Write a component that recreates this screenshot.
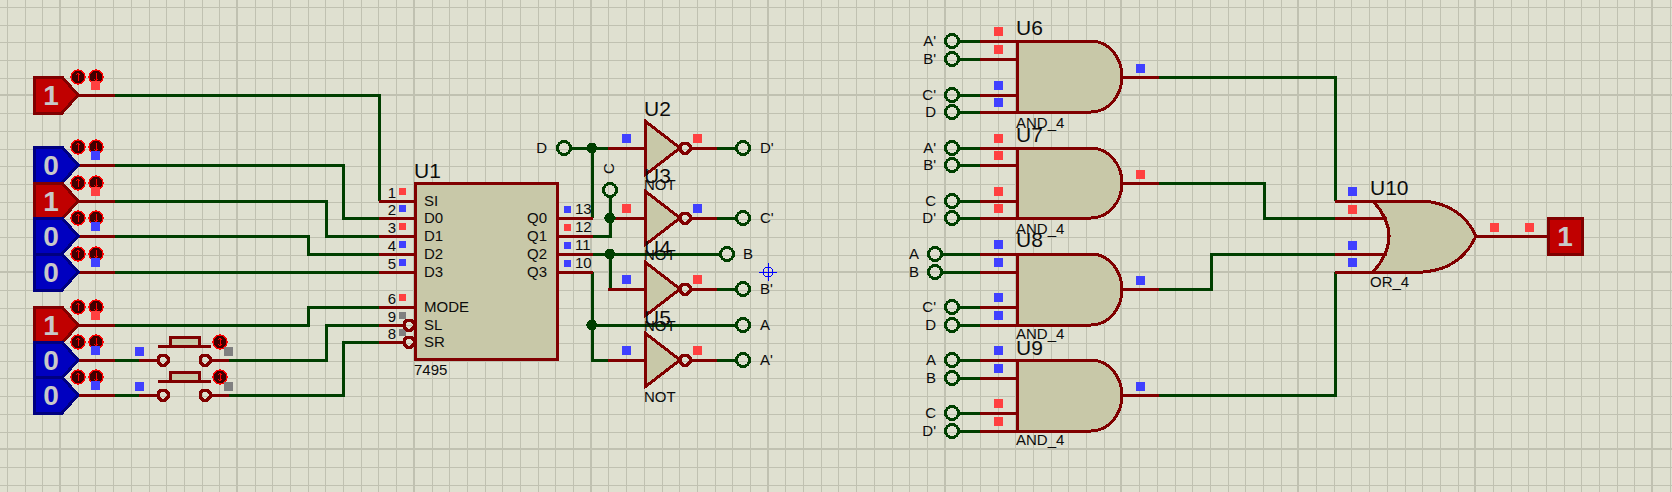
const SQUARE = {
  r: 'fill-[#ff4040]',
  b: 'fill-[#4040ff]',
  g: 'fill-[#808080]',
}

const gridX = Array.from({ length: 95 }, (_, i) => i)
const gridY = Array.from({ length: 30 }, (_, i) => i)

function Grid() {
  return (
    <g className="stroke-[#c0c1b1]">
      {gridX.map(i => {
        const x = Math.round(7 + i * 17.69)
        return <line key={i} x1={x} x2={x} y1="0" y2="492" strokeWidth={(i - 3) % 10 === 0 ? 2 : 1} />
      })}
      {gridY.map(i => {
        const y = Math.round(7 + i * 17.69)
        return <line key={i} x1="0" x2="1672" y1={y} y2={y} strokeWidth={(i - 5) % 10 === 0 ? 2 : 1} />
      })}
    </g>
  )
}

function Wire({ points, red }) {
  return <polyline points={points} className={`fill-none stroke-[3] ${red ? 'stroke-[#800000]' : 'stroke-[#003f00]'}`} />
}

function Probe({ x, y, color, size = 9 }) {
  return <rect x={x} y={y} width={size} height={size} className={SQUARE[color]} />
}

function Label({ x, y, children, end, big }) {
  return (
    <text
      x={x}
      y={y}
      textAnchor={end ? 'end' : 'start'}
      className={`fill-[#0c0c0c] ${big ? 'text-[21px]' : 'text-[15px]'}`}
    >
      {children}
    </text>
  )
}

// small round up / down buttons on the logic state sources
function StepButton({ cx, cy, up, down }) {
  return (
    <g>
      <circle cx={cx} cy={cy} r="7" className="fill-[#400000] stroke-[#ff0000] stroke-[1.5]" />
      <line x1={cx} x2={cx} y1={cy - 4} y2={cy + 4} className="stroke-[#ff0000] stroke-[1]" />
      {up && <polyline points={`${cx - 2},${cy - 2} ${cx},${cy - 4} ${cx + 2},${cy - 2}`} className="fill-none stroke-[#ff0000] stroke-[1]" />}
      {down && <polyline points={`${cx - 2},${cy + 2} ${cx},${cy + 4} ${cx + 2},${cy + 2}`} className="fill-none stroke-[#ff0000] stroke-[1]" />}
    </g>
  )
}

function LogicSource({ cy, value }) {
  const high = value === 1
  return (
    <g>
      <polygon
        points={`34,${cy - 18} 62,${cy - 18} 78,${cy} 62,${cy + 18} 34,${cy + 18}`}
        className={`stroke-[3] ${high ? 'fill-[#c00000] stroke-[#800000]' : 'fill-[#0000c0] stroke-[#000080]'}`}
      />
      <text x="51" y={cy + 10} textAnchor="middle" className="fill-[#c8c8c8] text-[28px] font-bold">{value}</text>
      <StepButton cx={78} cy={cy - 18} up />
      <StepButton cx={96} cy={cy - 18} down />
      <Probe x={91} y={cy - 14} color={high ? 'r' : 'b'} />
    </g>
  )
}

function Terminal({ x, y }) {
  return <circle cx={x} cy={y} r="6.5" className="fill-none stroke-[#003f00] stroke-[3]" />
}

function Junction({ x, y }) {
  return <polygon points={`${x - 6},${y} ${x - 3},${y - 5} ${x + 3},${y - 5} ${x + 6},${y} ${x + 3},${y + 5} ${x - 3},${y + 5}`} className="fill-[#003f00]" />
}

// inversion bubble and switch contact, an octagon as the editor draws them
function Bubble({ x, y }) {
  return (
    <polygon
      points={`${x - 5},${y - 2} ${x - 2},${y - 5} ${x + 2},${y - 5} ${x + 5},${y - 2} ${x + 5},${y + 2} ${x + 2},${y + 5} ${x - 2},${y + 5} ${x - 5},${y + 2}`}
      className="fill-none stroke-[#800000] stroke-[3]"
    />
  )
}

function PushButton({ cy }) {
  return (
    <g>
      <Wire points={`79,${cy} 115,${cy}`} red />
      <Wire points={`115,${cy} 139,${cy}`} />
      <Wire points={`139,${cy} 158,${cy}`} red />
      <Bubble x={163} y={cy} />
      <Bubble x={205} y={cy} />
      <Wire points={`210,${cy} 229,${cy}`} red />
      <Wire points={`158,${cy - 14} 211,${cy - 14}`} red />
      <rect x="170" y={cy - 23} width="29" height="9" className="fill-[#c8c8a8] stroke-[#800000] stroke-[3]" />
      <StepButton cx={220} cy={cy - 18} up down />
      <Probe x={135} y={cy - 13} color="b" />
      <Probe x={224} y={cy - 13} color="g" />
    </g>
  )
}

function NotGate({ cy, name, inColor, outColor, nameY, typeY, inX = 608 }) {
  return (
    <g>
      <Wire points={`${inX},${cy} 645,${cy}`} red />
      <polygon points={`645,${cy - 27} 680,${cy} 645,${cy + 27}`} className="fill-[#c8c8a8] stroke-[#800000] stroke-[3]" />
      <Bubble x={685} y={cy} />
      <Wire points={`691,${cy} 717,${cy}`} red />
      <Wire points={`717,${cy} 736,${cy}`} />
      <Terminal x={743} y={cy} />
      <Probe x={622} y={cy - 14} color={inColor} />
      <Probe x={693} y={cy - 14} color={outColor} />
      <Label x={644} y={nameY} big>{name}</Label>
      <Label x={644} y={typeY}>NOT</Label>
    </g>
  )
}

function AndGate({ name, rows, labels, colors, out, outColor, nameY, typeY, farFirst }) {
  const [top, , , bottom] = rows
  return (
    <g>
      {rows.map((y, i) => {
        const cx = farFirst && i < 2 ? 935 : 952
        return (
          <g key={i}>
            <Wire points={`${cx + 6},${y} 980,${y}`} />
            <Wire points={`980,${y} 1017,${y}`} red />
            <Terminal x={cx} y={y} />
            <Label x={cx - 16} y={y + 5} end>{labels[i]}</Label>
            <Probe x={994} y={y - 14} color={colors[i]} />
          </g>
        )
      })}
      <path
        d={`M1017 ${top} H1091 A31 ${(bottom - top) / 2} 0 0 1 1091 ${bottom} H1017 Z`}
        className="fill-[#c8c8a8] stroke-[#800000] stroke-[3]"
      />
      <Wire points={`1122,${out} 1159,${out}`} red />
      <Probe x={1136} y={out - 13} color={outColor} />
      <Label x={1016} y={nameY} big>{name}</Label>
      <Label x={1016} y={typeY}>AND_4</Label>
    </g>
  )
}

const andGates = [
  { name: 'U6', rows: [41, 59, 95, 112], labels: ["A'", "B'", "C'", 'D'], colors: ['r', 'r', 'b', 'b'], out: 77, outColor: 'b', nameY: 35, typeY: 128 },
  { name: 'U7', rows: [148, 165, 201, 218], labels: ["A'", "B'", 'C', "D'"], colors: ['r', 'r', 'r', 'r'], out: 183, outColor: 'r', nameY: 142, typeY: 234 },
  { name: 'U8', rows: [254, 272, 307, 325], labels: ['A', 'B', "C'", 'D'], colors: ['b', 'b', 'b', 'b'], out: 289, outColor: 'b', nameY: 247, typeY: 339, farFirst: true },
  { name: 'U9', rows: [360, 378, 413, 431], labels: ['A', 'B', 'C', "D'"], colors: ['b', 'b', 'r', 'r'], out: 395, outColor: 'b', nameY: 355, typeY: 445 },
]

const shiftPins = [
  { n: '1', y: 201, name: 'SI', c: 'r' },
  { n: '2', y: 218, name: 'D0', c: 'b' },
  { n: '3', y: 236, name: 'D1', c: 'r' },
  { n: '4', y: 254, name: 'D2', c: 'b' },
  { n: '5', y: 272, name: 'D3', c: 'b' },
  { n: '6', y: 307, name: 'MODE', c: 'r' },
  { n: '9', y: 325, name: 'SL', c: 'g' },
  { n: '8', y: 342, name: 'SR', c: 'g' },
]

const outPins = [
  { n: '13', y: 218, name: 'Q0', c: 'b' },
  { n: '12', y: 236, name: 'Q1', c: 'r' },
  { n: '11', y: 254, name: 'Q2', c: 'b' },
  { n: '10', y: 272, name: 'Q3', c: 'b' },
]

const greenWires = [
  '115,95 379,95 379,201',
  '115,165 343,165 343,218 379,218',
  '115,201 326,201 326,236 379,236',
  '115,236 308,236 308,254 379,254',
  '115,272 379,272',
  '115,325 308,325 308,307 379,307',
  '229,360 326,360 326,325 379,325',
  '229,395 343,395 343,342 379,342',
  // outputs of the 7495
  '592,218 592,148 608,148',
  '570,148 592,148',
  '610,197 610,236 593,236',
  '610,218 616,218',
  '593,254 720,254',
  '610,254 610,289 608,289',
  '593,272 592,272 592,360 608,360',
  '592,325 736,325',
  // product terms into the OR
  '1159,77 1335,77 1335,201',
  '1159,183 1264,183 1264,218 1335,218',
  '1159,289 1211,289 1211,254 1335,254',
  '1159,395 1335,395 1335,272',
]

const srcRows = [
  { cy: 95, value: 1 },
  { cy: 165, value: 0 },
  { cy: 201, value: 1 },
  { cy: 236, value: 0 },
  { cy: 272, value: 0 },
  { cy: 325, value: 1 },
  { cy: 360, value: 0 },
  { cy: 395, value: 0 },
]

export default function App() {
  return (
    <div className="w-[1672px] h-[492px] overflow-hidden bg-[#dfe0d0] font-['Liberation_Sans',sans-serif]">
      <svg width="1672" height="492" viewBox="0 0 1672 492" className="block" shapeRendering="crispEdges">
        <Grid />

        {greenWires.map(points => <Wire key={points} points={points} />)}

        {/* Source stubs, drawn top to bottom so lower ones overlap */}
        {srcRows.map(({ cy }) => cy < 360 && <Wire key={cy} points={`79,${cy} 115,${cy}`} red />)}
        {srcRows.map(({ cy, value }) => <LogicSource key={cy} cy={cy} value={value} />)}

        <PushButton cy={360} />
        <PushButton cy={395} />

        {/* U1 7495 */}
        {shiftPins.map(pin => (
          <g key={pin.n}>
            <Wire points={`379,${pin.y} ${pin.y > 320 ? 404 : 414},${pin.y}`} red />
            <Label x={396} y={pin.y - 3} end>{pin.n}</Label>
            <Probe x={399} y={pin.y - 13} size={7} color={pin.c} />
          </g>
        ))}
        {outPins.map(pin => <Wire key={pin.n} points={`556,${pin.y} 593,${pin.y}`} red />)}
        <rect x="415" y="183" width="142" height="176" className="fill-[#c8c8a8] stroke-[#800000] stroke-[3]" />
        <Bubble x={409} y={325} />
        <Bubble x={409} y={342} />
        {shiftPins.map(pin => <Label key={pin.n} x={424} y={pin.y + 5}>{pin.name}</Label>)}
        {outPins.map(pin => (
          <g key={pin.n}>
            <Label x={547} y={pin.y + 5} end>{pin.name}</Label>
            <Label x={575} y={pin.y - 4}>{pin.n}</Label>
            <Probe x={564} y={pin.y - 12} size={7} color={pin.c} />
          </g>
        ))}
        <Label x={414} y={178} big>U1</Label>
        <Label x={414} y={375}>7495</Label>

        {/* Inverters */}
        <Terminal x={564} y={148} />
        <Label x={547} y={153} end>D</Label>
        <Terminal x={610} y={190} />
        <text x="614" y="174" transform="rotate(-90 614 174)" className="fill-[#0c0c0c] text-[15px]">C</text>
        <NotGate cy={148} name="U2" inColor="b" outColor="r" nameY={116} typeY={190} />
        <NotGate cy={218} name="U3" inColor="r" outColor="b" nameY={183} typeY={260} inX={615} />
        <NotGate cy={289} name="U4" inColor="b" outColor="r" nameY={255} typeY={331} />
        <NotGate cy={360} name="U5" inColor="b" outColor="r" nameY={325} typeY={402} />
        <Terminal x={727} y={254} />
        <Terminal x={743} y={325} />
        <Junction x={592} y={148} />
        <Junction x={610} y={218} />
        <Junction x={610} y={254} />
        <Junction x={592} y={325} />
        <Label x={760} y={153}>D'</Label>
        <Label x={760} y={223}>C'</Label>
        <Label x={743} y={259}>B</Label>
        <Label x={760} y={294}>B'</Label>
        <Label x={760} y={330}>A</Label>
        <Label x={760} y={365}>A'</Label>

        {/* Cursor marker */}
        <g className="stroke-[#0000ff] stroke-[1] fill-none">
          <circle cx="768" cy="272" r="5" />
          <line x1="759" x2="777" y1="272" y2="272" />
          <line x1="768" x2="768" y1="263" y2="281" />
        </g>

        {andGates.map(gate => <AndGate key={gate.name} {...gate} />)}

        {/* U10 OR_4 */}
        <Wire points="1335,201 1423,201" red />
        <Wire points="1335,272 1423,272" red />
        <path
          d="M1373 201 H1423 Q1461 204 1476 236 Q1461 269 1423 272 H1373 Q1405 236 1373 201 Z"
          className="fill-[#c8c8a8] stroke-[#800000] stroke-[3]"
        />
        <Wire points="1335,218 1387,218" red />
        <Wire points="1335,254 1387,254" red />
        <Wire points="1476,236 1547,236" red />
        <Probe x={1348} y={187} color="b" />
        <Probe x={1348} y={205} color="r" />
        <Probe x={1348} y={241} color="b" />
        <Probe x={1348} y={258} color="b" />
        <Probe x={1490} y={223} color="r" />
        <Probe x={1525} y={223} color="r" />
        <Label x={1370} y={195} big>U10</Label>
        <Label x={1370} y={287}>OR_4</Label>
        <rect x="1548" y="218" width="34" height="36" className="fill-[#c00000] stroke-[#800000] stroke-[3]" />
        <text x="1565" y="246" textAnchor="middle" className="fill-[#c8c8c8] text-[28px] font-bold">1</text>
      </svg>
    </div>
  )
}
